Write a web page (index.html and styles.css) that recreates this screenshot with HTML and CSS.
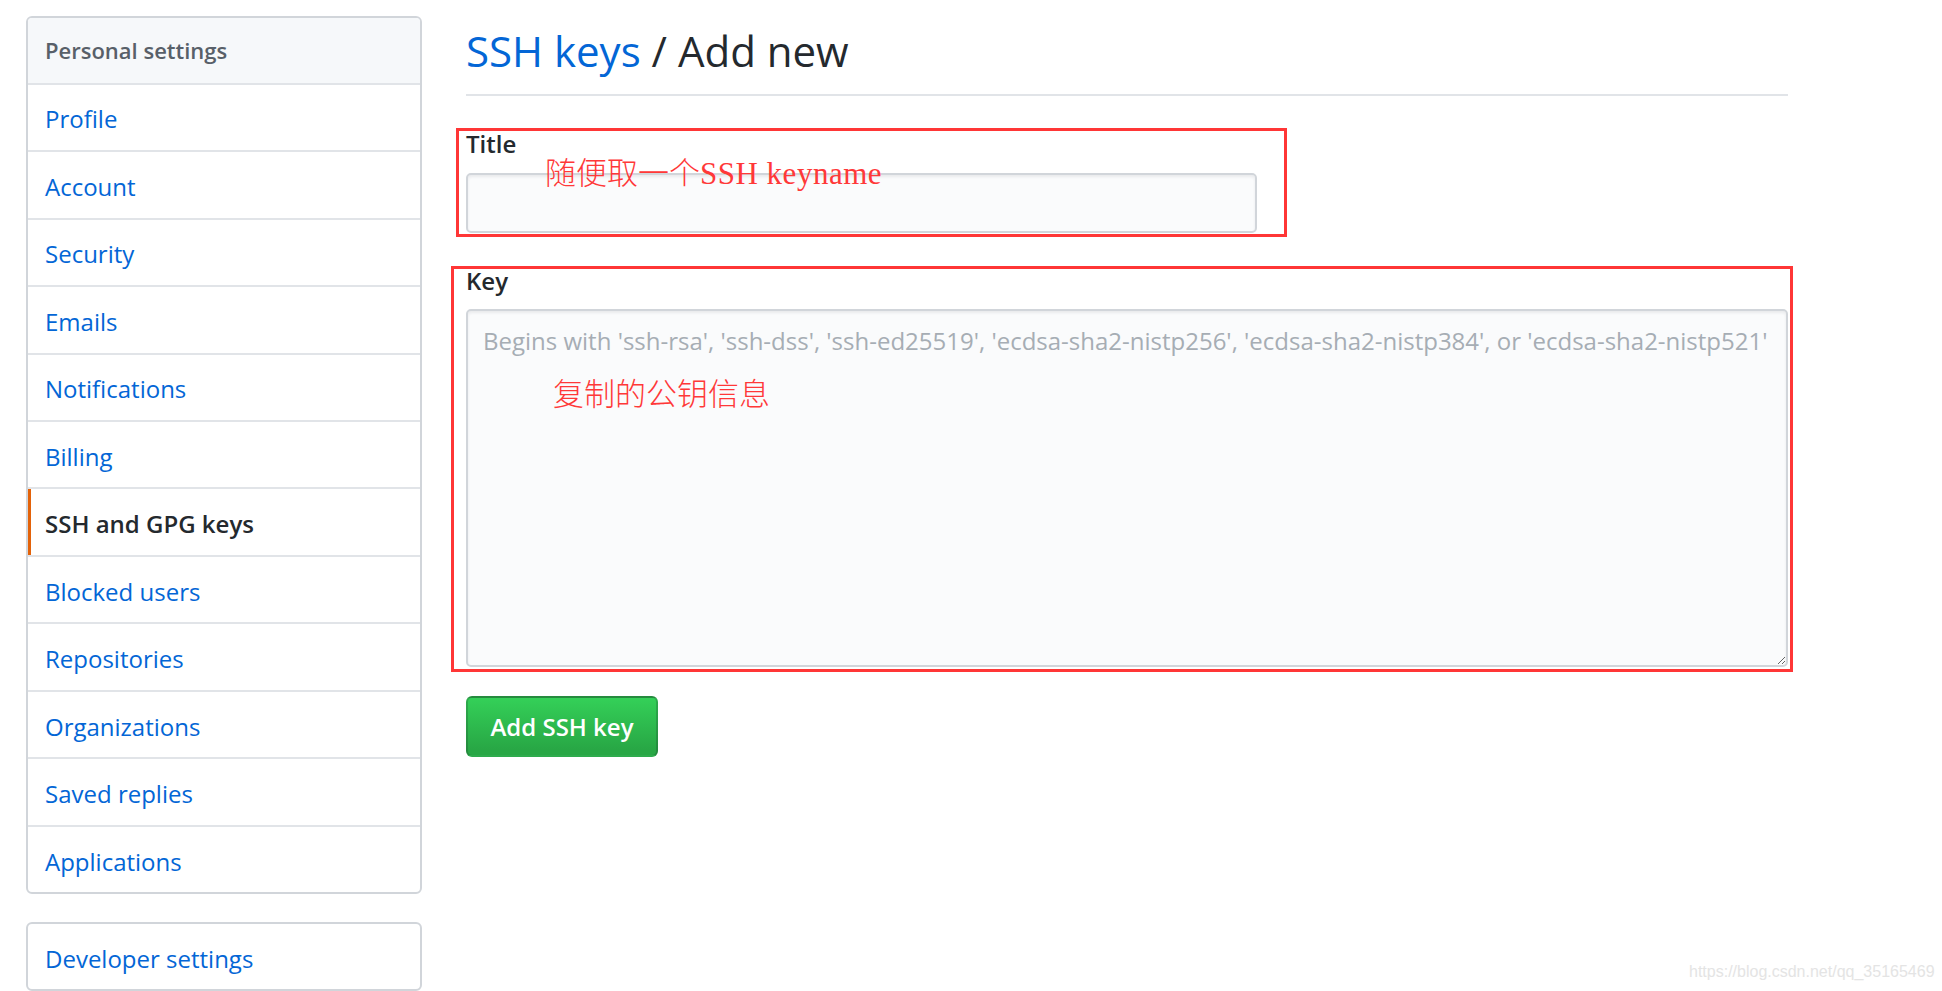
FILE: index.html
```html
<!DOCTYPE html>
<html lang="en">
<head>
<meta charset="utf-8">
<title>SSH keys / Add new</title>
<link rel="stylesheet" href="styles.css">
</head>
<body>
<div class="page">
  <aside class="sidebar">
    <nav class="menu">
      <div class="menu-heading">Personal settings</div>
      <a class="menu-item" href="#">Profile</a>
      <a class="menu-item" href="#">Account</a>
      <a class="menu-item" href="#">Security</a>
      <a class="menu-item" href="#">Emails</a>
      <a class="menu-item" href="#">Notifications</a>
      <a class="menu-item" href="#">Billing</a>
      <a class="menu-item selected" href="#">SSH and GPG keys</a>
      <a class="menu-item" href="#">Blocked users</a>
      <a class="menu-item" href="#">Repositories</a>
      <a class="menu-item" href="#">Organizations</a>
      <a class="menu-item" href="#">Saved replies</a>
      <a class="menu-item" href="#">Applications</a>
    </nav>
    <nav class="menu menu-dev">
      <a class="menu-item" href="#">Developer settings</a>
    </nav>
  </aside>

  <main class="content">
    <div class="subhead">
      <h2 class="subhead-heading"><a href="#">SSH keys</a> / Add new</h2>
    </div>
    <form class="key-form">
      <div class="form-group title-group">
        <label class="form-label" for="title">Title</label>
        <input class="form-control title-input" id="title" type="text">
      </div>
      <div class="form-group key-group">
        <label class="form-label" for="key">Key</label>
        <textarea class="form-control key-input" id="key" placeholder="Begins with 'ssh-rsa', 'ssh-dss', 'ssh-ed25519', 'ecdsa-sha2-nistp256', 'ecdsa-sha2-nistp384', or 'ecdsa-sha2-nistp521'"></textarea>
      </div>
      <button class="btn-primary" type="button">Add SSH key</button>
    </form>
  </main>

  <div class="annot-box annot-title"></div>
  <div class="annot-box annot-key"></div>
  <div class="annot-text annot-text-title">随便取一个<span class="latin">SSH keyname</span></div>
  <div class="annot-text annot-text-key">复制的公钥信息</div>
  <div class="watermark">https://blog.csdn.net/qq_35165469</div>
</div>
</body>
</html>
```

FILE: styles.css
```css
html, body {
  margin: 0;
  padding: 0;
  background: #ffffff;
  overflow: hidden;
  height: 991px;
}

body {
  font-family: "Open Sans", "Noto Sans", sans-serif;
  font-size: 24px;
  color: #24292e;
}

.page {
  position: relative;
  display: flex;
  gap: 44px;
  padding: 16px 0 0 26px;
  height: 975px;
}

/* ---------- sidebar ---------- */
.sidebar {
  width: 396px;
  flex: none;
  display: flex;
  flex-direction: column;
  gap: 28px;
}

.menu {
  display: flex;
  flex-direction: column;
  border: 2px solid #d1d5da;
  border-radius: 6px;
  background: #fff;
  overflow: hidden;
}

.menu-heading {
  height: 65px;
  display: flex;
  align-items: center;
  padding-left: 17px;
  background: #f6f8fa;
  color: #586069;
  font-size: 22px;
  font-weight: 600;
  border-bottom: 2px solid #e1e4e8;
}

.menu-item {
  height: 62.8px;
  padding-top: 3px;
  display: flex;
  align-items: center;
  padding-left: 17px;
  color: #0366d6;
  text-decoration: none;
  border-bottom: 2px solid #e1e4e8;
}

.menu-item:last-child {
  border-bottom: none;
}

.menu-item.selected {
  color: #24292e;
  font-weight: 600;
  box-shadow: inset 3px 0 0 #e36209;
}

.menu-dev .menu-item {
  height: 62px;
}

/* ---------- content ---------- */
.content {
  width: 1322px;
  flex: none;
}

.subhead {
  border-bottom: 2px solid #e1e4e8;
  padding-bottom: 15.3px;
}

.subhead-heading {
  margin: 6.7px 0 0;
  font-size: 42px;
  line-height: 56px;
  font-weight: 400;
  color: #24292e;
}

.subhead-heading a {
  color: #0366d6;
  text-decoration: none;
}

.key-form {
  display: flex;
  flex-direction: column;
  align-items: flex-start;
}

.form-group {
  display: flex;
  flex-direction: column;
  align-items: flex-start;
}

.title-group {
  margin-top: 31.7px;
}

.key-group {
  margin-top: 31.7px;
}

.form-label {
  font-weight: 600;
  line-height: 32px;
  font-size: 24px;
}

.form-control {
  box-sizing: border-box;
  margin: 0;
  font-family: "Open Sans", "Noto Sans", sans-serif;
  font-size: 24px;
  line-height: 36px;
  color: #24292e;
  background: #fafbfc;
  border: 2px solid #d1d5da;
  border-radius: 5px;
  box-shadow: inset 0 2px 3px rgba(27, 31, 35, 0.075);
  outline: none;
}

.title-input {
  margin-top: 13.3px;
  width: 791px;
  height: 60px;
  padding: 0 15px;
}

.key-input {
  margin-top: 12.3px;
  width: 1322px;
  height: 358px;
  padding: 12px 15px;
  resize: vertical;
  white-space: nowrap;
  overflow: hidden;
}

.key-input::placeholder {
  color: #a6adb4;
  opacity: 1;
}

.btn-primary {
  margin-top: 29px;
  width: 192px;
  height: 61px;
  box-sizing: border-box;
  border: 2px solid rgba(27, 31, 35, 0.2);
  border-radius: 6px;
  background: linear-gradient(180deg, #34d058 0%, #28a745 90%);
  color: #ffffff;
  font-family: "Open Sans", "Noto Sans", sans-serif;
  font-size: 24px;
  font-weight: 600;
  padding: 0;
  cursor: pointer;
}

/* ---------- annotations (overlay) ---------- */
.annot-box {
  position: absolute;
  box-sizing: border-box;
  border: 3px solid #ff3636;
  pointer-events: none;
}

.annot-title {
  left: 456px;
  top: 128px;
  width: 831px;
  height: 109px;
}

.annot-key {
  left: 451px;
  top: 266px;
  width: 1342px;
  height: 406px;
}

.annot-text {
  position: absolute;
  color: #ff3838;
  font-family: "Noto Sans CJK SC", sans-serif;
  font-weight: 300;
  font-size: 31px;
  line-height: 31px;
  white-space: nowrap;
}

.annot-text .latin {
  font-family: "Liberation Serif", "Noto Sans CJK SC", serif;
  font-weight: 400;
  font-size: 31px;
  letter-spacing: 0.5px;
}

.annot-text-title {
  left: 545px;
  top: 155px;
}

.annot-text-key {
  left: 553px;
  top: 376px;
}

.watermark {
  position: absolute;
  left: 1689px;
  top: 962px;
  font-family: "Liberation Sans", Arial, sans-serif;
  font-size: 16px;
  line-height: 20px;
  color: #e4e4e4;
  white-space: nowrap;
}
```
